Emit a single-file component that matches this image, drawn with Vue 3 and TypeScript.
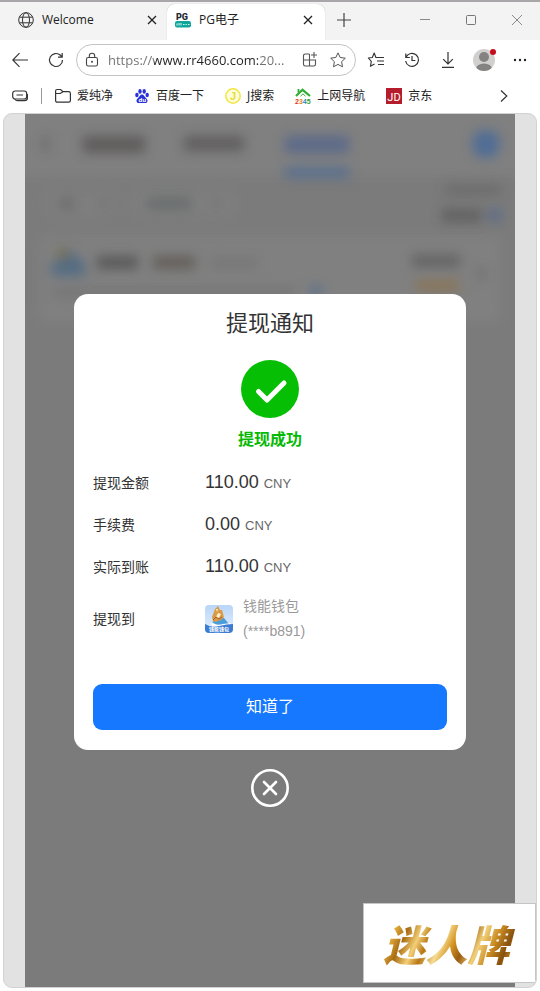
<script setup lang="ts">
import { ref } from 'vue'

interface Bookmark {
  label: string
  icon: 'folder' | 'baidu' | 'search' | 'nav' | 'jd'
}

interface AmountRow {
  label: string
  value: string
}

const address = ref('https://www.rr4660.com:20...')
const open = ref(true)

const bookmarks: Bookmark[] = [
  { label: '爱纯净', icon: 'folder' },
  { label: '百度一下', icon: 'baidu' },
  { label: 'J搜索', icon: 'search' },
  { label: '上网导航', icon: 'nav' },
  { label: '京东', icon: 'jd' },
]

const rows: AmountRow[] = [
  { label: '提现金额', value: '110.00' },
  { label: '手续费', value: '0.00' },
  { label: '实际到账', value: '110.00' },
]
</script>

<template>
  <div class="browser">
    <header class="tabs">
      <div class="tab">
        <svg class="i16" viewBox="0 0 16 16"><g fill="none" stroke="#333"><circle cx="8" cy="8" r="7.3" /><ellipse cx="8" cy="8" rx="3.5" ry="7.3" /><path d="M1.5 5.2h13M1.5 10.8h13" /></g></svg>
        <span class="tab-title">Welcome</span>
        <button class="tab-close" aria-label="关闭标签页"><svg width="10" height="10" viewBox="0 0 10 10"><path d="M1 1l8 8M9 1L1 9" stroke="#222" stroke-width="1.3" /></svg></button>
      </div>
      <div class="tab active">
        <svg class="i16" viewBox="0 0 16 16">
          <text x="1" y="8" class="pg">PG</text>
          <rect y="9" width="16" height="6.500" rx="2" fill="#12a59a" />
          <path d="M2 11.500v2M4 11v2.500M6 11v2.500M8 12.500h1.500M10.500 12.500h1.300M13 12.500h1.500" stroke="#d5fffb" stroke-width="1" />
        </svg>
        <span class="tab-title">PG电子</span>
        <button class="tab-close" aria-label="关闭标签页"><svg width="10" height="10" viewBox="0 0 10 10"><path d="M1 1l8 8M9 1L1 9" stroke="#222" stroke-width="1.3" /></svg></button>
      </div>
      <button class="new-tab" aria-label="新建标签页"><svg width="14" height="14" viewBox="0 0 14 14"><path d="M7 0v14M0 7h14" stroke="#444" stroke-width="1.2" /></svg></button>
      <div class="window-controls">
        <button aria-label="最小化"><svg width="10" height="10" viewBox="0 0 10 10"><path d="M0 4.500h10" stroke="#888" /></svg></button>
        <button aria-label="最大化"><svg width="10" height="10" viewBox="0 0 10 10"><rect x=".5" y=".5" width="9" height="9" rx="1" fill="none" stroke="#777" /></svg></button>
        <button aria-label="关闭"><svg width="10" height="10" viewBox="0 0 10 10"><path d="M0 0l10 10M10 0L0 10" stroke="#888" /></svg></button>
      </div>
    </header>

    <nav class="toolbar">
      <button class="tool" aria-label="返回"><svg class="i16" viewBox="0 0 16 16"><path d="M16 8H.8M7.500 1.200L.8 8l6.700 6.800" fill="none" stroke="#333" stroke-width="1.1" /></svg></button>
      <button class="tool" aria-label="刷新"><svg class="i16" viewBox="0 0 16 16"><path d="M14.500 8A6.500 6.500 0 1 1 12.500 3.300L14 4.800M14.200 1v4.200H10" fill="none" stroke="#333" stroke-width="1.2" /></svg></button>
      <div class="address">
        <svg class="i16" viewBox="0 0 16 16"><g fill="none" stroke="#444" stroke-width="1.1"><rect x="2.500" y="5.500" width="11" height="8.500" rx="1.800" /><path d="M5.300 5.500V4a2.700 2.700 0 0 1 5.400 0v1.500" /></g><circle cx="8" cy="9.800" r="1" fill="#444" /></svg>
        <input v-model="address" type="text" aria-label="地址栏" />
        <button aria-label="应用"><svg class="i16" viewBox="0 0 16 16"><path d="M7.500 2H3.200A1.700 1.700 0 0 0 1.500 3.700v8.600A1.700 1.700 0 0 0 3.200 14h8.600a1.700 1.700 0 0 0 1.700-1.700V8H1.500M7.500 2v12M12 0v6M9 3h6" fill="none" stroke="#555" stroke-width="1.100" /></svg></button>
        <button aria-label="收藏此页"><svg class="i16" viewBox="0 0 16 16"><path d="M8 .9l2.200 4.600 5.100.7-3.700 3.500.9 5.100L8 12.400l-4.500 2.400.9-5.100L.7 6.200l5.100-.7z" fill="none" stroke="#555" stroke-linejoin="round" /></svg></button>
      </div>
      <button class="tool" aria-label="收藏夹"><svg class="i16" viewBox="0 0 16 16"><path d="M10.200 5.500H7.900L6.200 1 4.300 5.500.3 6l3 3.300-.9 5L6.500 12M10 5.500h6M9 9h7M10 12.500h6" fill="none" stroke="#333" stroke-width="1.100" stroke-linejoin="round" /></svg></button>
      <button class="tool" aria-label="历史记录"><svg class="i16" viewBox="0 0 16 16"><path d="M1.800 1.500v4h4M2 5.300A6.500 6.500 0 1 1 1.600 9M8 4v4.500h3.300" fill="none" stroke="#333" stroke-width="1.200" /></svg></button>
      <button class="tool" aria-label="下载"><svg class="i16" viewBox="0 0 16 16"><path d="M8 0v12M3.200 7.200L8 12l4.800-4.800M2 15.400h12" fill="none" stroke="#333" stroke-width="1.200" /></svg></button>
      <button class="tool" aria-label="个人资料">
        <svg width="24" height="24" viewBox="0 0 24 24"><defs><clipPath id="face"><circle cx="12" cy="12" r="11" /></clipPath></defs><circle cx="12" cy="12" r="11" fill="#d2d0ce" /><g clip-path="url(#face)" fill="#858381"><circle cx="12" cy="9" r="5" /><ellipse cx="12" cy="21" rx="8" ry="5.500" /></g><circle cx="21" cy="4" r="3" fill="#c50f1f" /></svg>
      </button>
      <button class="tool" aria-label="更多"><svg class="i16" viewBox="0 0 16 16"><g fill="#222"><circle cx="3" cy="8" r="1.200" /><circle cx="8" cy="8" r="1.200" /><circle cx="13" cy="8" r="1.200" /></g></svg></button>
    </nav>

    <nav class="bookmarks">
      <svg class="i16" viewBox="0 0 16 16"><g fill="none" stroke="#333" stroke-width="1.200"><rect x=".7" y="3" width="14" height="8" rx="2.500" /><path d="M4.500 7h6.500M3 11.200c.7 1.300 1.300 1.500 2.500 1.500h7c2 0 2.900-1 2.900-2.700V6" /></g></svg>
      <span class="divider"></span>
      <a v-for="b in bookmarks" :key="b.label" href="#" class="bookmark">
        <svg v-if="b.icon === 'folder'" class="i16" viewBox="0 0 16 16"><path d="M.6 12.500V3A1.500 1.500 0 0 1 2.100 1.500h3.500L8 3.700h5.700a1.700 1.700 0 0 1 1.700 1.700v7.100a1.700 1.700 0 0 1-1.700 1.700H2.300A1.700 1.700 0 0 1 .6 12.500zM.8 5.500h4.400L8 3.700" fill="none" stroke="#333" stroke-width="1.200" /></svg>
        <svg v-else-if="b.icon === 'baidu'" class="i16" viewBox="0 0 16 16"><g fill="#2932d8"><ellipse cx="2.900" cy="7" rx="1.700" ry="2.200" /><ellipse cx="6" cy="3.400" rx="1.700" ry="2.300" /><ellipse cx="10.200" cy="3.400" rx="1.700" ry="2.300" /><ellipse cx="13.200" cy="7" rx="1.700" ry="2.200" /><path d="M8 6.500c1.900 0 2.400 2 3.700 3.200 1.500 1.300 2.300 2.400 1.600 4-.9 2-3.300 1.300-5.300 1.300s-4.400.7-5.300-1.300c-.7-1.600.2-2.700 1.600-4C5.600 8.500 6.100 6.500 8 6.500z" /></g><text x="4.500" y="14" class="du">du</text></svg>
        <svg v-else-if="b.icon === 'search'" class="i16" viewBox="0 0 16 16"><circle cx="8" cy="8" r="7.200" fill="#fffde0" stroke="#f1e640" stroke-width="1.500" /><text x="8" y="12" class="letter-j">J</text></svg>
        <svg v-else-if="b.icon === 'nav'" class="i16" viewBox="0 0 16 16">
          <g fill="none" stroke="#30ad35"><path d="M1 8L7.500 1.800 15 8" stroke-width="2.200" /><path d="M3.500 4.500V1" stroke-width="1.800" /><path d="M5.500 8.200l2.500-2.300 2.500 2.300" /></g>
          <text x="0" y="15.500" class="digits"><tspan fill="#df3524">2</tspan><tspan fill="#e08b20">3</tspan><tspan fill="#268bc8">4</tspan><tspan fill="#399d35">5</tspan></text>
        </svg>
        <svg v-else class="i16" viewBox="0 0 16 16"><rect width="16" height="16" fill="#b61d2c" /><text x="8" y="12.500" class="jd">JD</text></svg>
        <span>{{ b.label }}</span>
      </a>
      <button class="more" aria-label="更多书签"><svg width="8" height="12" viewBox="0 0 8 12"><path d="M1 .5L6.800 6 1 11.500" fill="none" stroke="#333" stroke-width="1.200" /></svg></button>
    </nav>

    <main class="viewport">
      <div class="page">
        <div class="scene" aria-hidden="true">
          <svg class="smudges" viewBox="0 0 490 220">
            <defs>
              <filter id="soft" x="-50%" y="-100%" width="200%" height="300%"><feGaussianBlur stdDeviation="6" /></filter>
            </defs>
            <rect width="490" height="220" fill="#7b7b7b" />
            <g filter="url(#soft)">
              <rect x="-20" y="-20" width="530" height="82" fill="#808080" />
              <rect x="14" y="122" width="462" height="86" rx="8" fill="#808080" />
              <rect x="20" y="76" width="72" height="28" rx="14" fill="#7f7f7f" />
              <rect x="106" y="76" width="106" height="28" rx="14" fill="#7f7f7f" />
            </g>
            <g filter="url(#soft)" opacity=".9">
              <rect x="17" y="24" width="7" height="12" fill="#666" />
              <rect x="58" y="22" width="62" height="17" fill="#5c5959" />
              <rect x="159" y="22" width="60" height="15" fill="#5d5b5b" />
              <rect x="260" y="22" width="64" height="17" fill="#59688a" />
              <rect x="260" y="54" width="64" height="9" fill="#4e6a95" />
              <circle cx="461" cy="30" r="14" fill="#4b6a98" />
              <rect x="34" y="84" width="16" height="11" fill="#6c6c6c" />
              <rect x="74" y="85" width="10" height="8" fill="#737373" />
              <rect x="122" y="84" width="44" height="11" fill="#656a6a" />
              <rect x="186" y="85" width="10" height="8" fill="#737373" />
              <rect x="420" y="71" width="56" height="10" fill="#6a6a6a" />
              <rect x="417" y="95" width="40" height="13" fill="#5e5e5e" />
              <circle cx="470" cy="101" r="7" fill="#586a8a" />
              <path d="M38 132l12 8 10 10v12H26v-8z" fill="#506a84" />
              <rect x="33" y="134" width="10" height="12" fill="#777047" />
              <rect x="72" y="142" width="41" height="13" fill="#555" />
              <rect x="128" y="142" width="42" height="13" fill="#605c57" />
              <rect x="186" y="145" width="46" height="8" fill="#737373" />
              <rect x="28" y="174" width="242" height="9" fill="#737373" />
              <circle cx="291" cy="177" r="6" fill="#536d8d" />
              <rect x="387" y="141" width="48" height="12" fill="#606060" />
              <rect x="391" y="167" width="43" height="9" fill="#8c7148" />
              <path d="M453 154l6 6-6 6" stroke="#606060" stroke-width="3" fill="none" />
            </g>
          </svg>
        </div>

        <div v-if="open" class="overlay">
          <section class="dialog" role="dialog" aria-labelledby="dialog-title">
            <h1 id="dialog-title">提现通知</h1>
            <svg class="success" viewBox="0 0 58 58"><circle cx="29" cy="29" r="29" fill="#06bf04" /><path d="M17.500 31.500L26 40 43 23" fill="none" stroke="#fff" stroke-width="5" stroke-linecap="round" stroke-linejoin="round" /></svg>
            <p class="status">提现成功</p>
            <dl class="details">
              <div v-for="r in rows" :key="r.label" class="row">
                <dt>{{ r.label }}</dt>
                <dd><span class="amount">{{ r.value }}</span> <span class="unit">CNY</span></dd>
              </div>
              <div class="row target">
                <dt>提现到</dt>
                <dd class="wallet">
                  <svg width="28" height="28" viewBox="0 0 28 28">
                    <defs>
                      <linearGradient id="sky" x2="0" y2="1"><stop stop-color="#b9d5f8" /><stop offset="1" stop-color="#e5f1ff" /></linearGradient>
                      <clipPath id="tile"><rect width="28" height="28" rx="4" /></clipPath>
                    </defs>
                    <g clip-path="url(#tile)">
                      <rect width="28" height="28" fill="url(#sky)" />
                      <path d="M15 13l4 0 5 6-1 2-11-1-5-3z" fill="#4b9ddb" />
                      <path d="M8 16l-1-4 3-8 3-3 2 4 2 0 2 7-3 3-3 1-2 1z" fill="#d99b45" />
                      <path d="M11 4l2 0-1 3zM13 8l3 1-2 4-3-1z" fill="#fff0c9" />
                      <path d="M8 15l3-3 3 2 3-2" fill="none" stroke="#a65e2e" />
                      <path d="M6 18q6 3 12 1l8-1-3 5H7z" fill="#fff" />
                      <path d="M0 19q6 4 14 2t14-2v9H0z" fill="#3d7cd3" />
                      <text x="14" y="26" class="tile-name">钱能钱包</text>
                    </g>
                  </svg>
                  <span class="wallet-name">钱能钱包<br />(****b891)</span>
                </dd>
              </div>
            </dl>
            <button class="confirm" @click="open = false">知道了</button>
          </section>
          <button class="dismiss" aria-label="关闭" @click="open = false"><svg width="38" height="38" viewBox="0 0 38 38"><circle cx="19" cy="19" r="17.700" fill="none" stroke="#fff" stroke-width="2.600" /><path d="M13 13l12 12M25 13L13 25" stroke="#fff" stroke-width="2.600" stroke-linecap="round" /></svg></button>
        </div>
      </div>
      <aside class="stamp"><span>迷人牌</span></aside>
    </main>
  </div>
</template>

<style>
body {
  margin: 0;
}
</style>

<style scoped>
.browser {
  box-sizing: border-box;
  display: flex;
  flex-direction: column;
  min-height: 100vh;
  padding-bottom: 3px;
  border-top: 2px solid #a8a6a8;
  background: #fff;
  color: #222;
  font: 12px/16px "Open Sans", "Noto Sans CJK SC", sans-serif;
}

button {
  display: flex;
  align-items: center;
  justify-content: center;
  padding: 0;
  border: 0;
  background: none;
  font: inherit;
  color: inherit;
}

svg {
  flex: none;
  display: block;
}

.i16 {
  width: 16px;
  height: 16px;
  overflow: visible;
}

.pg {
  fill: #222c33;
  font: 900 9px Roboto, sans-serif;
}

.du {
  fill: #fff;
  font: 700 6px "Open Sans", sans-serif;
}

.letter-j {
  fill: #e9dd30;
  font: 700 11px "Liberation Sans", sans-serif;
  text-anchor: middle;
}

.digits {
  font: 700 7px "Liberation Sans", sans-serif;
}

.jd {
  fill: #fff;
  font: 11px Roboto, sans-serif;
  text-anchor: middle;
}

.tile-name {
  fill: #fff;
  font: 700 5px "Noto Sans CJK SC", sans-serif;
  text-anchor: middle;
}

.tabs {
  display: flex;
  height: 38px;
  background: #f3f3f3;
}

.tab {
  box-sizing: border-box;
  display: flex;
  align-items: center;
  gap: 8px;
  width: 167px;
  padding: 0 9px 2px 18px;
}

.tab.active {
  width: 158px;
  margin-top: 2px;
  padding: 0 11px 4px 8px;
  border-radius: 8px 8px 0 0;
  background: #fff;
  box-shadow: 0 0 1px #aaa;
  clip-path: inset(-2px -2px 0 -2px);
}

.tab-title {
  flex: 1;
}

.tab-close {
  width: 12px;
  height: 16px;
}

.new-tab {
  width: 38px;
  height: 36px;
}

.window-controls {
  display: flex;
  height: 36px;
  margin-left: auto;
}

.window-controls button {
  width: 46px;
}

.toolbar {
  display: flex;
  align-items: center;
  height: 40px;
  padding: 0 2px;
}

.tool {
  flex: none;
  width: 36px;
  height: 32px;
}

.address {
  box-sizing: border-box;
  display: flex;
  flex: 1;
  align-items: center;
  gap: 8px;
  min-width: 0;
  height: 32px;
  margin: 0 2px;
  padding: 0 7px;
  border: 1px solid #c4c4c4;
  border-radius: 16px;
}

.address input {
  flex: 1;
  min-width: 0;
  padding: 0;
  border: 0;
  outline: 0;
  background: linear-gradient(90deg, #707070 46px, #222 46px, #222 150px, #707070 150px);
  background-clip: text;
  color: transparent;
  font: 13px/20px "Open Sans", sans-serif;
}

.address button {
  width: 20px;
  height: 24px;
}

.bookmarks {
  display: flex;
  align-items: center;
  gap: 21px;
  height: 32px;
  padding: 0 32px 1px 12px;
}

.divider {
  width: 1px;
  height: 16px;
  margin: 0 -8px;
  background: #999;
}

.bookmark {
  display: flex;
  align-items: center;
  gap: 6px;
  color: inherit;
  text-decoration: none;
  white-space: nowrap;
}

.more {
  width: 8px;
  height: 20px;
  margin-left: auto;
}

.viewport {
  position: relative;
  display: flex;
  flex: 1;
  margin: 0 3px;
  padding: 0 21px;
  overflow: hidden;
  border: 1px solid #d2d2d2;
  border-radius: 9px;
  background: #e2e2e2;
}

.page {
  display: grid;
  flex: 1;
  background: #7b7b7b;
}

.scene,
.overlay {
  grid-area: 1 / 1;
}

.smudges {
  width: 100%;
}

.overlay {
  z-index: 1;
  display: flex;
  flex-direction: column;
  align-items: center;
  justify-content: center;
  gap: 19px;
}

.dialog {
  box-sizing: border-box;
  display: flex;
  flex-direction: column;
  align-items: center;
  width: 80%;
  padding: 14px 19px 20px;
  border-radius: 14px;
  background: #fff;
  color: #333;
  font-family: "Liberation Sans", "Noto Sans CJK SC", sans-serif;
}

.dialog h1 {
  margin: 0 0 20px;
  font-size: 22px;
  font-weight: 400;
  line-height: 32px;
}

.success {
  width: 58px;
  height: 58px;
}

.status {
  margin: 10px 0 0;
  color: #06b904;
  font-size: 16px;
  font-weight: 700;
  line-height: 24px;
}

.details {
  align-self: stretch;
  margin: 10px 0 34px;
}

.row {
  display: grid;
  grid-template-columns: 112px 1fr;
  align-items: center;
  height: 42px;
}

.row.target {
  height: 62px;
}

dt {
  font-size: 14px;
  line-height: 24px;
}

dd {
  margin: 0;
  font-size: 18px;
  line-height: 24px;
}

.unit {
  color: #666;
  font-size: 13px;
}

.wallet {
  display: flex;
  align-items: center;
  gap: 10px;
  color: #999;
  font-size: 14px;
  line-height: 25px;
}

.confirm {
  align-self: stretch;
  height: 46px;
  border-radius: 9px;
  background: #1678ff;
  color: #fff;
  font-size: 16px;
}

.stamp {
  position: absolute;
  right: 0;
  bottom: 4px;
  display: flex;
  align-items: center;
  justify-content: center;
  width: 171px;
  height: 78px;
  border: 1px solid #c5c5c5;
  background: #fff;
}

.stamp span {
  padding: 0 6px 0 0;
  background: linear-gradient(115deg, #8c5210 4%, #e3ad3c 12%, #a86b13 20%, #f3cf76 29%, #b77716 36%, #f5dc94 45%, #d79827 52%, #985b10 60%, #f1cf78 69%, #c98b22 78%, #87500e 87%, #dba536 95%);
  background-clip: text;
  color: transparent;
  font: italic 900 42px/60px "Noto Sans CJK SC", sans-serif;
}
</style>
